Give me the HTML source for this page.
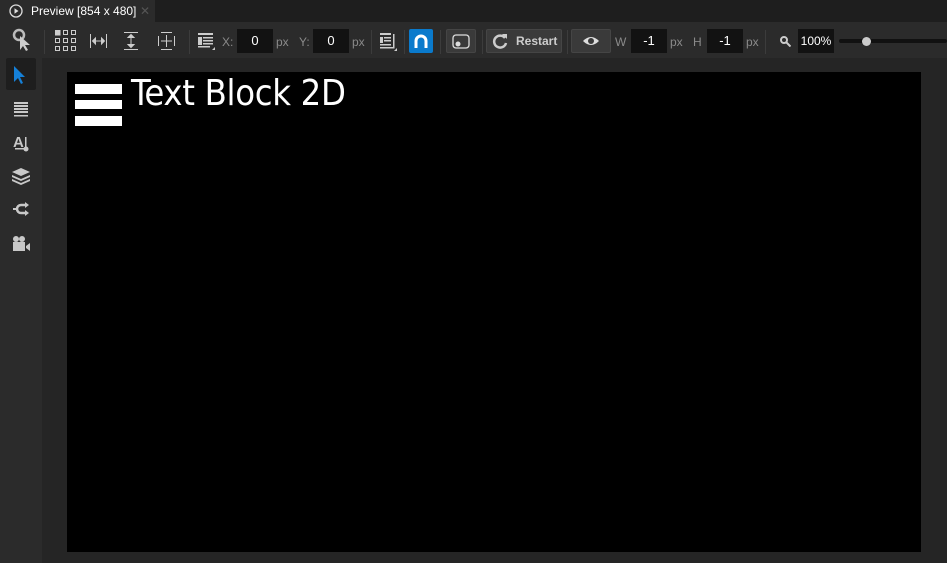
<!DOCTYPE html>
<html><head><meta charset="utf-8"><style>
*{margin:0;padding:0;box-sizing:border-box}
body{width:947px;height:563px;overflow:hidden;background:#1e1e1e;font-family:"Liberation Sans",sans-serif;position:relative;color:#ddd}
.a{position:absolute}
.sep{position:absolute;top:30px;width:1px;height:24px;background:#3c3c3c}
.inp{position:absolute;top:29px;height:24px;background:#121212;color:#fff;font-size:13px;text-align:center;line-height:24px}
.lbl{position:absolute;top:35px;font-size:12px;color:#8a8a8a}
.btn{position:absolute;top:29px;height:24px;background:#3a3a3a;border:1px solid #454545;border-radius:2px}
.side{position:absolute;left:9px;fill:#c8c8c8}
</style></head><body>
<div class="a" style="left:0;top:0;width:155px;height:22px;background:#2b2b2b"></div>
<svg class="a" style="left:9px;top:4px" width="14" height="14"><circle cx="7" cy="7" r="6" fill="none" stroke="#ddd" stroke-width="1.3"/><path d="M5.5 4.3v5.4l4-2.7z" fill="#ddd"/></svg>
<div class="a" style="left:31px;top:4px;font-size:12px;color:#fff">Preview [854 x 480]</div>
<div class="a" style="left:140px;top:4px;font-size:12px;color:#555">✕</div>
<div class="a" style="left:0;top:22px;width:947px;height:36px;background:#2b2b2b"></div>
<div class="a" style="left:0;top:58px;width:42px;height:505px;background:#2b2b2b"></div>
<div class="a" style="left:42px;top:58px;width:905px;height:505px;background:#252525"></div>
<div class="a" style="left:67px;top:72px;width:854px;height:480px;background:#000"></div>
<div class="a" style="left:75px;top:84px;width:47px;height:10px;background:#fff"></div>
<div class="a" style="left:75px;top:100px;width:47px;height:9px;background:#fff"></div>
<div class="a" style="left:75px;top:116px;width:47px;height:10px;background:#fff"></div>
<div class="a" style="left:131px;top:73px;font-size:36px;color:#fff;font-family:'DejaVu Sans Condensed','Liberation Sans',sans-serif;letter-spacing:-0.3px">Text Block 2D</div>

<svg class="a" style="left:12px;top:28px" width="20" height="24"><circle cx="7" cy="7" r="5" fill="none" stroke="#bbb" stroke-width="2.5"/><path d="M8 8l0 14 3-4 3 5 2-1-3-5 5 0z" fill="#ccc"/></svg>
<div class="sep" style="left:44px"></div>
<svg class="a" style="left:55px;top:30px" width="22" height="22" fill="none" stroke="#ccc"><rect x="0" y="0" width="5" height="5" fill="#ccc"/><rect x="8.5" y=".5" width="4" height="4"/><rect x="16.5" y=".5" width="4" height="4"/><rect x=".5" y="8.5" width="4" height="4"/><rect x="8.5" y="8.5" width="4" height="4"/><rect x="16.5" y="8.5" width="4" height="4"/><rect x=".5" y="16.5" width="4" height="4"/><rect x="8.5" y="16.5" width="4" height="4"/><rect x="16.5" y="16.5" width="4" height="4"/></svg>
<svg class="a" style="left:90px;top:34px" width="17" height="14" stroke="#ccc" fill="#ccc"><path d="M.5 0v14M16.5 0v14M3 7h11"/><path d="M2.5 7l3-3v6zM14.5 7l-3-3v6z"/></svg>
<svg class="a" style="left:124px;top:32px" width="14" height="18" stroke="#ccc" fill="#ccc"><path d="M0 .5h14M0 17.5h14M7 3v12"/><path d="M7 2.5l-3 3h6zM7 15.5l-3-3h6z"/></svg>
<svg class="a" style="left:158px;top:32px" width="17" height="18" stroke="#ccc" fill="#ccc"><path d="M3 .5h11M3 17.5h11M.5 4v10M16.5 4v10M8.5 3v12M3 9h11"/></svg>
<div class="sep" style="left:189px"></div>
<svg class="a" style="left:198px;top:33px" width="18" height="18" fill="#ccc"><rect x="0" y="0" width="15" height="2"/><rect x="0" y="4" width="4" height="8"/><rect x="5" y="4" width="10" height="1.5"/><rect x="5" y="7" width="10" height="1.5"/><rect x="5" y="10" width="10" height="1.5"/><rect x="0" y="13" width="12" height="1.5"/><path d="M17 14v3h-3z"/></svg>
<div class="lbl" style="left:222px">X:</div>
<div class="inp" style="left:237px;width:36px">0</div>
<div class="lbl" style="left:276px">px</div>
<div class="lbl" style="left:299px">Y:</div>
<div class="inp" style="left:313px;width:36px">0</div>
<div class="lbl" style="left:352px">px</div>
<div class="sep" style="left:371px"></div>
<svg class="a" style="left:380px;top:32px" width="18" height="20" fill="#ccc"><rect x="0" y="1" width="11" height="2"/><rect x="0" y="5" width="3" height="6"/><rect x="4" y="5" width="7" height="1.5"/><rect x="4" y="8" width="7" height="1.5"/><rect x="0" y="12" width="11" height="1.5"/><rect x="13" y="2" width="1.5" height="13"/><rect x="0" y="15" width="14.5" height="1.5"/><path d="M17 16v3h-3z"/></svg>
<div class="sep" style="left:404px"></div>
<div class="a" style="left:409px;top:29px;width:24px;height:24px;background:#0a7acc;border-radius:2px"></div>
<svg class="a" style="left:413px;top:33px" width="16" height="16" fill="none" stroke="#fff" stroke-width="3"><path d="M3 15V8a5 5 0 0 1 10 0v7"/></svg>
<div class="sep" style="left:440px"></div>
<div class="btn" style="left:446px;width:30px"></div>
<svg class="a" style="left:452px;top:34px" width="18" height="15" fill="none" stroke="#ddd" stroke-width="1.3"><rect x="1" y="1" width="16" height="13" rx="3"/><circle cx="6" cy="10" r="2.5" fill="#ddd" stroke="none"/></svg>
<div class="sep" style="left:482px"></div>
<div class="btn" style="left:486px;width:76px"></div>
<svg class="a" style="left:492px;top:33px" width="16" height="16" fill="none" stroke="#ccc" stroke-width="2.5"><path d="M13 5A6 6 0 1 0 14 10"/><path d="M10 1l5 0 0 5z" fill="#ccc" stroke="none"/></svg>
<div class="a" style="left:516px;top:34px;font-size:12px;font-weight:bold;color:#ccc">Restart</div>
<div class="sep" style="left:567px"></div>
<div class="btn" style="left:571px;width:40px"></div>
<svg class="a" style="left:582px;top:35px" width="18" height="12"><path d="M1 6Q9 -2 17 6Q9 14 1 6z" fill="#ddd"/><circle cx="9" cy="6" r="3" fill="#3a3a3a"/></svg>
<div class="lbl" style="left:615px">W</div>
<div class="inp" style="left:631px;width:36px">-1</div>
<div class="lbl" style="left:670px">px</div>
<div class="lbl" style="left:693px">H</div>
<div class="inp" style="left:707px;width:36px">-1</div>
<div class="lbl" style="left:746px">px</div>
<div class="sep" style="left:765px"></div>
<svg class="a" style="left:780px;top:36px" width="11" height="11" stroke="#ccc" fill="none" stroke-width="2"><circle cx="4" cy="4" r="3"/><path d="M6.5 6.5l4 4"/></svg>
<div class="inp" style="left:798px;width:36px;font-size:12px">100%</div>
<div class="a" style="left:839px;top:39px;width:108px;height:4px;background:#111;border-radius:2px"></div>
<div class="a" style="left:862px;top:37px;width:9px;height:9px;background:#ccc;border-radius:50%"></div>

<div class="a" style="left:6px;top:58px;width:30px;height:32px;background:#1e1e1e;border-radius:2px"></div>
<svg class="a" style="left:14px;top:66px" width="12" height="18"><path d="M0 0v16l4-4 3 6 2-1-3-6h5z" fill="#1580d8"/></svg>
<svg class="side" style="top:102px" width="24" height="16"><rect x="5" y="0" width="14" height="2"/><rect x="5" y="3" width="14" height="2"/><rect x="5" y="6" width="14" height="2"/><rect x="5" y="9" width="14" height="2"/><rect x="5" y="13" width="14" height="1.5"/></svg>
<svg class="side" style="top:133px" width="24" height="20"><text x="4" y="14" font-size="15" font-weight="bold" font-family="Liberation Sans" fill="#c8c8c8">A</text><rect x="16" y="4" width="1.5" height="10"/><circle cx="17" cy="16" r="2.5"/><rect x="6" y="15" width="10" height="1.5"/></svg>
<svg class="side" style="top:167px" width="24" height="18"><path d="M12 1l9 4-9 4-9-4z"/><path d="M3 8l9 4 9-4v2l-9 4-9-4z"/><path d="M3 12l9 4 9-4v2l-9 4-9-4z"/></svg>
<svg class="side" style="top:202px" width="24" height="16"><path d="M4 7h4" stroke="#c8c8c8" stroke-width="2"/><path d="M17 3h-5a4 4 0 0 0 0 8h5" stroke="#c8c8c8" stroke-width="2.5" fill="none"/><path d="M16 0l4 3-4 3zM16 8l4 3-4 3z"/></svg>
<svg class="side" style="top:236px" width="24" height="16"><circle cx="7" cy="3" r="3"/><circle cx="13" cy="3" r="3"/><rect x="4" y="6" width="12" height="9"/><path d="M17 10l4-3v8l-4-3z"/></svg>
</body></html>
